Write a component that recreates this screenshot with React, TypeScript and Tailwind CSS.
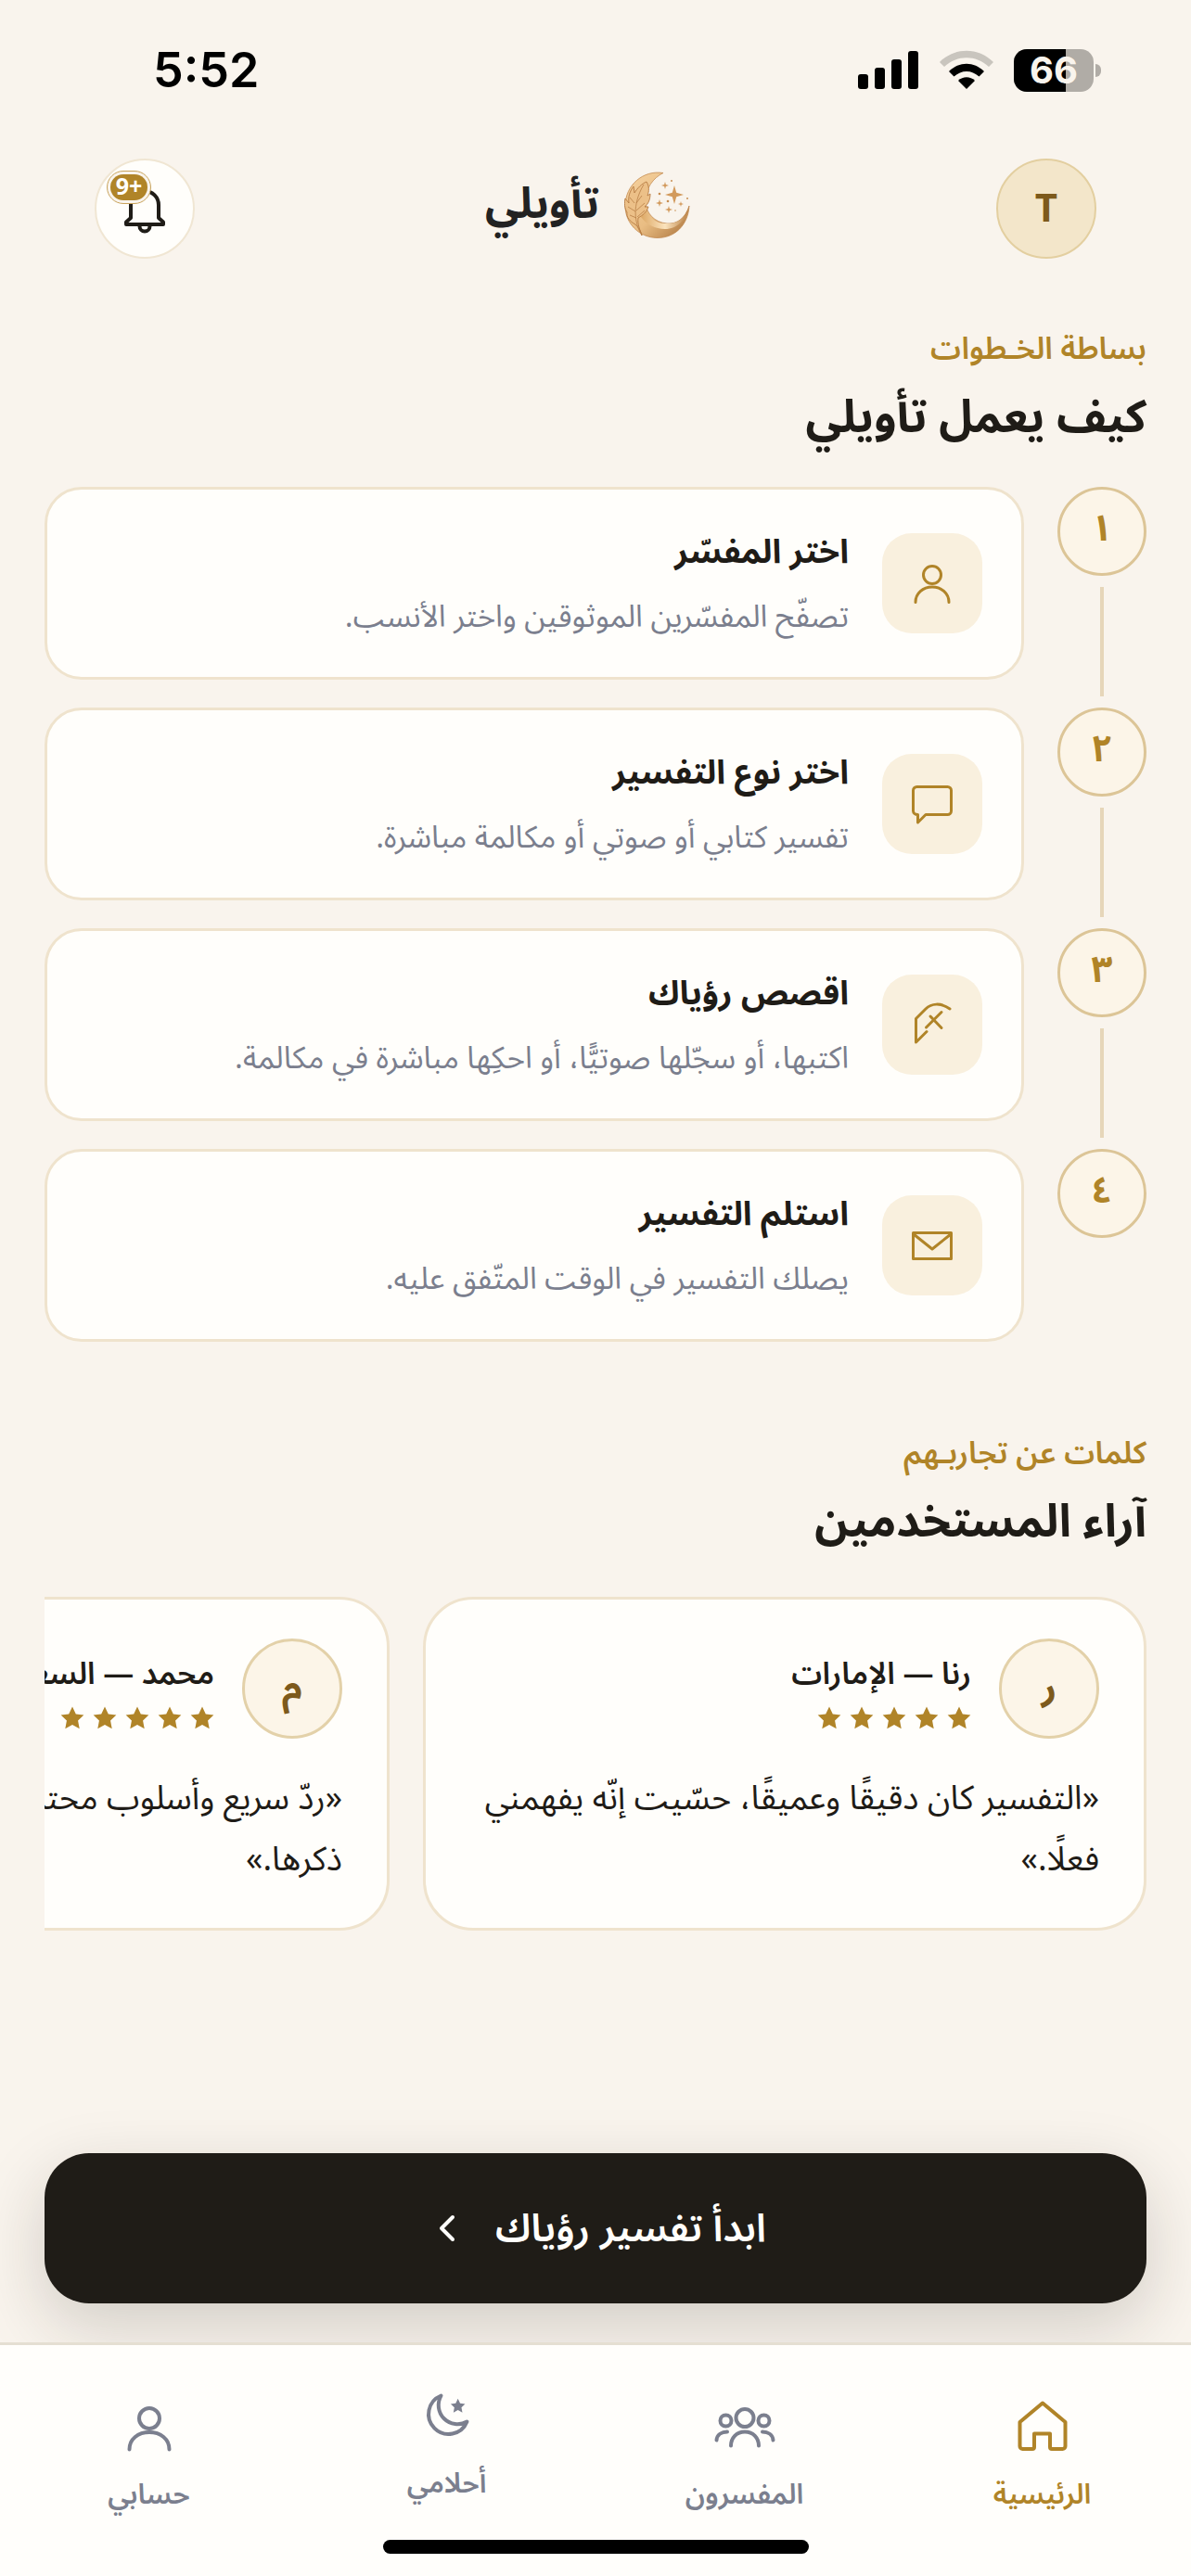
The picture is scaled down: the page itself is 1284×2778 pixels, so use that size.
import type { ReactNode } from "react";
import { ChevronLeft } from "lucide-react";

interface Step {
  num: string;
  title: string;
  text: string;
  icon: ReactNode;
}

interface Review {
  initial: string;
  name: string;
  quote: string;
}

interface Tab {
  label: string;
  href: string;
  icon: ReactNode;
  active?: boolean;
  raised?: boolean;
}

const STAR = "M12 .5l3.500 7.300 7.900 1-5.800 5.600 1.500 7.900-7.100-3.800-7.100 3.800 1.500-7.900L.6 8.800l7.900-1z";

const stroke = {
  fill: "none",
  stroke: "currentColor",
  strokeWidth: 3,
  strokeLinecap: "round",
  strokeLinejoin: "round",
} as const;

const steps: Step[] = [
  {
    num: "١",
    title: "اختر المفسّر",
    text: "تصفّح المفسّرين الموثوقين واختر الأنسب.",
    icon: (
      <>
        <circle cx="24" cy="15" r="9.5" />
        <path d="M6 44.5C6 35 14 28 24 28s18 7 18 16.5" />
      </>
    ),
  },
  {
    num: "٢",
    title: "اختر نوع التفسير",
    text: "تفسير كتابي أو صوتي أو مكالمة مباشرة.",
    icon: <path d="M7.5 5.5h33a4 4 0 0 1 4 4v22a4 4 0 0 1-4 4H17L8.500 44v-8.500c-3 0-5-2-5-4v-22a4 4 0 0 1 4-4z" />,
  },
  {
    num: "٣",
    title: "اقصص رؤياك",
    text: "اكتبها، أو سجّلها صوتيًّا، أو احكِها مباشرة في مكالمة.",
    icon: (
      <>
        <path d="M43 7C33 0 23 1 17 7L6.500 17.500V43L18 31.500" />
        <path d="M17.500 27 34 10.500M22 15l12 12.500" />
      </>
    ),
  },
  {
    num: "٤",
    title: "استلم التفسير",
    text: "يصلك التفسير في الوقت المتّفق عليه.",
    icon: (
      <>
        <rect x="3.5" y="10.5" width="41" height="28" />
        <path d="M4 12l20 16 20-16" />
      </>
    ),
  },
];

const reviews: Review[] = [
  {
    initial: "ر",
    name: "رنا — الإمارات",
    quote: "«التفسير كان دقيقًا وعميقًا، حسّيت إنّه يفهمني فعلًا.»",
  },
  {
    initial: "م",
    name: "محمد — السعودية",
    quote: "«ردّ سريع وأسلوب محترم لكل تفصيلة أحببت ذكرها.»",
  },
];

const tabs: Tab[] = [
  {
    label: "الرئيسية",
    href: "#home",
    active: true,
    icon: <path d="M27 2.500 2.500 23v26a3 3 0 0 0 3 3H16a2 2 0 0 0 2-2V35.500h17V50a2 2 0 0 0 2 2h11.500a3 3 0 0 0 3-3V23z" />,
  },
  {
    label: "المفسرون",
    href: "#interpreters",
    icon: (
      <>
        <circle cx="27" cy="18.500" r="9.500" />
        <circle cx="6.500" cy="21.500" r="6" />
        <circle cx="47.500" cy="21.500" r="6" />
        <path d="M12 48.500C12 40 18 33.500 27 33.500s15 6.500 15 15M8 33.500c-6 0-11 3-11.500 9M46 33.500c6 0 11 3 11.500 9" />
      </>
    ),
  },
  {
    label: "أحلامي",
    href: "#dreams",
    raised: true,
    icon: (
      <>
        <path d="M20.500 6.500A21.500 21.500 0 1 0 48.500 34.500 20.500 20.500 0 0 1 20.500 6.500z" />
        <path d={STAR} transform="translate(30.500 9.500) scale(.68)" fill="currentColor" stroke="none" />
      </>
    ),
  },
  {
    label: "حسابي",
    href: "#account",
    icon: (
      <>
        <circle cx="27" cy="19" r="11" />
        <path d="M5.500 52.500C5.500 41 15 34 27 34s21.500 7 21.500 18.500" />
      </>
    ),
  },
];

// four-pointed sparkle centred on cx, cy
function Sparkle({ cx, cy, r }: { cx: number; cy: number; r: number }) {
  const k = r * 0.22;
  return (
    <path
      d={`M${cx} ${cy - r}L${cx + k} ${cy - k} ${cx + r} ${cy} ${cx + k} ${cy + k} ${cx} ${cy + r} ${cx - k} ${cy + k} ${cx - r} ${cy} ${cx - k} ${cy - k}z`}
      fill="#d29a5c"
    />
  );
}

function Logo() {
  return (
    <svg viewBox="0 0 72 72" className="size-[72px]" aria-hidden="true">
      <defs>
        <linearGradient id="moon" x1="0" y1="0" x2="1" y2="1">
          <stop offset="0" stopColor="#f6d2a0" />
          <stop offset=".55" stopColor="#e9bd83" />
          <stop offset="1" stopColor="#a9713a" />
        </linearGradient>
        <linearGradient id="rim" x1="0" y1="0" x2="1" y2="0">
          <stop offset="0" stopColor="#dda865" />
          <stop offset=".5" stopColor="#fbe3bd" />
          <stop offset="1" stopColor="#b67c40" />
        </linearGradient>
      </defs>
      <path d="M42 1.500C20-2 1 15 1 37c0 19 15 34 34 34.500C55 72 69 57 70 37 66 50 57 57 46 56 33 55 23 45 23 32 23 18 31 7 42 1.500z" fill="url(#moon)" stroke="#bd8347" strokeWidth=".7" />
      <path d="M23 38c3 12 12 19 23 18 11 1 20-6 24-19-3 15-13 25-26 25-11 0-20-5-26-13z" fill="url(#rim)" />
      <path d="M19 69c-1-5-4-9-7-12C6 54 2 49 3 44c-3-5-3-10-2-15l4 5c-1-7 1-13 5-18l1 7c3-5 8-10 13-12 3 5 3 10 1 15l3-2c0 6-2 11-6 14h4c-2 6-6 9-11 12-1 7 2 13 4 19z" fill="#ecc088" stroke="#b57b42" strokeWidth=".9" />
      <path d="M19 69C11 56 8 36 21 14M11 34l-5-6M12 43l-8-5M13 50l-7-3M13 34l6-8M13 42l9-8M14 49l8-7" fill="none" stroke="#b98048" strokeWidth=".8" />
      <Sparkle cx={54} cy={25} r={10} />
      <Sparkle cx={44} cy={15} r={4} />
      <Sparkle cx={38} cy={34} r={4} />
      <Sparkle cx={48} cy={41} r={4} />
      <Sparkle cx={61} cy={35} r={3} />
      <g fill="#c78f52">
        <circle cx="51" cy="10" r="1" />
        <circle cx="38" cy="24" r="1.300" />
        <circle cx="47" cy="32" r="1.300" />
        <circle cx="68" cy="29" r="1" />
        <circle cx="55" cy="42" r=".8" />
      </g>
    </svg>
  );
}

function StatusBar() {
  return (
    <div dir="ltr" className="flex items-center justify-between pt-[44px] pr-[97px] pl-[165px] text-black">
      <span className="font-[Inter] text-[52px] leading-[64px] font-semibold">5:52</span>
      <div className="flex items-center gap-[22px]">
        <svg viewBox="0 0 66 44" className="h-[44px] w-[66px]" aria-hidden="true">
          <rect x="0" y="26" width="11" height="16" rx="3" />
          <rect x="18" y="19" width="11" height="23" rx="3" />
          <rect x="36" y="10" width="11" height="32" rx="3" />
          <rect x="54" y="1" width="11" height="41" rx="3" />
        </svg>
        <svg viewBox="0 0 58 44" className="h-[44px] w-[58px]" aria-hidden="true">
          <path d="M0 13C16-3.500 42-3.500 58 13l-5 5C39 5 19 5 5 18z" fill="#c9c5be" />
          <path d="M10 23c11-11 27-11 38 0l-5.500 5.500c-8-7.500-19-7.500-27 0z" />
          <path d="M20 33c5-5 13-5 18 0l-9 9z" />
        </svg>
        <div className="flex items-center gap-[2px]">
          <div className="relative flex h-[46px] w-[86px] items-center justify-center overflow-hidden rounded-[14px] bg-[#b0aca6]">
            <div className="absolute inset-y-0 left-0 w-[65%] bg-black" />
            <span className="relative font-[Inter] text-[40px] leading-[46px] font-bold text-[#f9f4ed]">66</span>
          </div>
          <div className="h-[14px] w-[6px] rounded-r-full bg-[#b0aca6]" />
        </div>
      </div>
    </div>
  );
}

function Header() {
  return (
    <header className="flex items-center justify-between px-[102px] pt-[63px]">
      <button className="size-[108px] rounded-full border-2 border-[#e3cfa0] bg-[#f3e6ca] text-[42px] font-bold text-[#7d5a1c]">
        T
      </button>
      <div className="flex items-center gap-[27px] ps-4 pb-2">
        <Logo />
        <span className="text-[46px] leading-[72px] font-bold text-[#222]">تأويلي</span>
      </div>
      <button
        aria-label="الإشعارات"
        className="relative flex size-[108px] items-center justify-center rounded-full border-2 border-[#f0e6d3] bg-[#fffefb] text-[#1f1c17]"
      >
        <svg viewBox="0 0 54 54" className="size-[54px]" {...stroke} strokeWidth={4}>
          <path d="M27 8a15 15 0 0 0-15 15v14l-5 4.500V44h40v-2.500L42 37V23A15 15 0 0 0 27 8z" />
          <path d="M21.500 46a5.500 5.500 0 0 0 11 0" />
        </svg>
        <span className="absolute top-[11px] left-[11px] rounded-full border border-[#c9a45c] bg-[#f9f4ed] p-[3px]">
          <span dir="ltr" className="block w-[40px] rounded-full bg-[#b08428] text-center text-[25px] leading-[28px] font-bold text-[#fffefb]">
            9+
          </span>
        </span>
      </button>
    </header>
  );
}

function SectionTitle({ label, title }: { label: string; title: string }) {
  return (
    <div>
      <p className="text-[33px] leading-[56px] font-semibold text-[#b08428]">{label}</p>
      <h2 className="text-[49px] leading-[92px] font-bold text-[#1f1c17]">{title}</h2>
    </div>
  );
}

function StepRow({ step, last }: { step: Step; last: boolean }) {
  return (
    <li className="flex gap-9">
      <div className="flex flex-col items-center">
        <span className="flex size-24 items-center justify-center rounded-full border-3 border-[#dcc597] bg-[#fcf5e8] pb-1 text-[40px] leading-none font-bold text-[#b08428]">
          {step.num}
        </span>
        {!last && <span className="my-3 w-1 flex-1 bg-[#e6d6b9]" />}
      </div>
      <div className={`flex h-[208px] flex-1 items-center gap-9 rounded-[40px] border-3 border-[#efe3cd] bg-[#fffefb] px-[42px] ${last ? "" : "mb-[30px]"}`}>
        <span className="flex size-[108px] shrink-0 items-center justify-center rounded-[32px] bg-[#f9f0de] text-[#b08428]">
          <svg viewBox="0 0 48 48" className="size-12 overflow-visible" {...stroke}>
            {step.icon}
          </svg>
        </span>
        <div className="pt-[6px]">
          <h3 className="text-[36px] leading-[68px] font-bold text-[#1f1c17]">{step.title}</h3>
          <p className="text-[33px] leading-[72px] text-[#7b7f8e]">{step.text}</p>
        </div>
      </div>
    </li>
  );
}

function ReviewCard({ review }: { review: Review }) {
  return (
    <article className="w-[780px] shrink-0 rounded-[54px] border-3 border-[#efe3cd] bg-[#fffefb] px-12 pt-[42px] pb-10">
      <div className="flex items-center gap-[30px]">
        <span className="flex size-[108px] shrink-0 items-center justify-center rounded-full border-3 border-[#e3d1a9] bg-[#fcf5e8] text-[40px] font-bold text-[#7d5a1c]">
          {review.initial}
        </span>
        <div>
          <h3 className="text-[33px] leading-[60px] font-semibold text-[#1f1c17]">{review.name}</h3>
          <div className="flex gap-[9px] pt-1" role="img" aria-label="5 من 5">
            {[1, 2, 3, 4, 5].map((n) => (
              <svg key={n} viewBox="0 0 24 24" className="size-[26px] fill-[#b08428]">
                <path d={STAR} />
              </svg>
            ))}
          </div>
        </div>
      </div>
      <p className="mt-8 text-[36px] leading-[66px] text-[#1f1c17]">{review.quote}</p>
    </article>
  );
}

export default function App() {
  return (
    <div
      dir="rtl"
      className="flex min-h-screen flex-col overflow-hidden bg-[#f9f4ed] font-['Noto_Sans_Arabic','Noto_Sans','DejaVu_Sans',sans-serif]"
    >
      <StatusBar />
      <Header />

      <main className="flex flex-1 flex-col px-12 pt-[70px]">
        <section>
          <SectionTitle label="بساطة الخـطوات" title="كيف يعمل تأويلي" />
          <ol className="mt-[28px]">
            {steps.map((s, i) => (
              <StepRow key={s.num} step={s} last={i === steps.length - 1} />
            ))}
          </ol>
        </section>

        <section className="mt-[93px]">
          <SectionTitle label="كلمات عن تجاربـهم" title="آراء المستخدمين" />
          <div className="mt-[34px] flex gap-9 overflow-hidden">
            {reviews.map((r) => (
              <ReviewCard key={r.name} review={r} />
            ))}
          </div>
        </section>
      </main>

      <div className="px-12 pb-[42px]">
        <button className="flex h-[162px] w-full items-center justify-center gap-[28px] rounded-[48px] bg-[#1f1c17] text-[42px] font-semibold text-[#fffefb] shadow-[0_24px_72px_rgba(31,28,23,0.18)]">
          ابدأ تفسير رؤياك
          <ChevronLeft size={48} strokeWidth={2} />
        </button>
      </div>

      {/* Tab bar */}
      <nav className="relative border-t-3 border-[#e5dfd2] bg-[#fffefb] pt-[60px] pb-6">
        <div className="grid grid-cols-4">
          {tabs.map((t) => (
            <a
              key={t.href}
              href={t.href}
              className={`flex flex-col items-center gap-6 ${t.active ? "text-[#b08428]" : "text-[#7b7f8e]"} ${t.raised ? "-mt-3" : ""}`}
            >
              <svg viewBox="0 0 54 54" className="size-[54px] overflow-visible" {...stroke} strokeWidth={4}>
                {t.icon}
              </svg>
              <span className="text-[30px] leading-[48px] font-semibold">{t.label}</span>
            </a>
          ))}
        </div>
        <div className="mx-auto mt-6 h-[15px] w-[459px] rounded-full bg-black" />
      </nav>
    </div>
  );
}
